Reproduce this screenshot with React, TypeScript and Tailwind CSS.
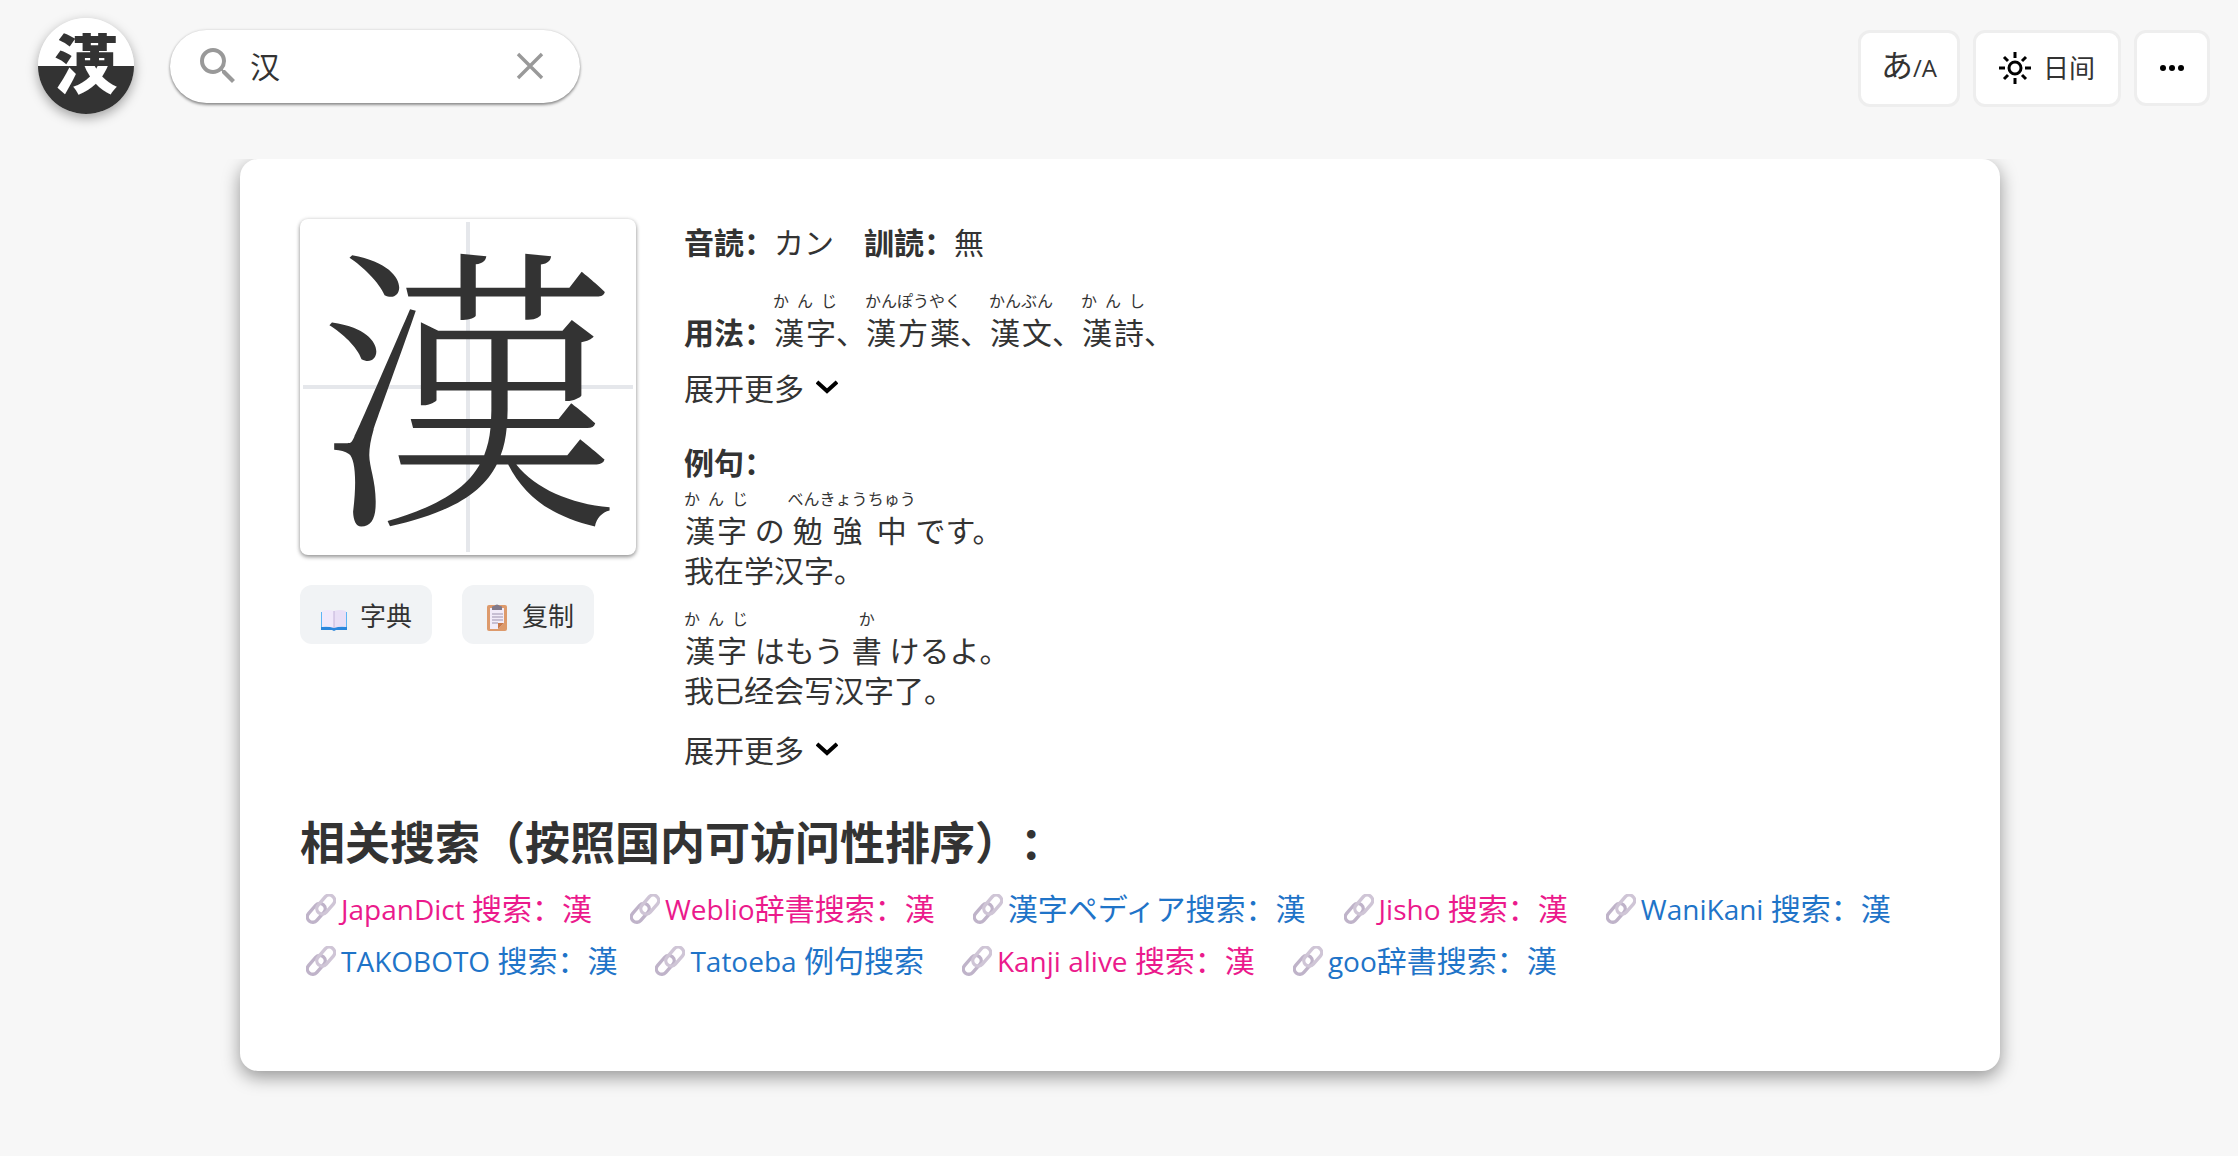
import type { ReactNode } from 'react';

type Annotated = { base: string; ruby: string };
type Part = string | Annotated;

const usages: Annotated[] = [
  { base: '漢字', ruby: 'か\u2002ん\u2002じ' },
  { base: '漢方薬', ruby: 'かんぽうやく' },
  { base: '漢文', ruby: 'かんぶん' },
  { base: '漢詩', ruby: 'か\u2002ん\u2002し' },
];

const examples: { parts: Part[]; translation: string }[] = [
  {
    parts: [
      { base: '漢字', ruby: 'か\u2002ん\u2002じ' },
      ' の ',
      { base: '勉強', ruby: 'べんきょう' },
      { base: '中', ruby: 'ちゅう' },
      ' です。',
    ],
    translation: '我在学汉字。',
  },
  {
    parts: [{ base: '漢字', ruby: 'か\u2002ん\u2002じ' }, ' はもう ', { base: '書', ruby: 'か' }, ' けるよ。'],
    translation: '我已经会写汉字了。',
  },
];

const links = [
  { latin: 'JapanDict ', text: '搜索：漢', visited: true },
  { latin: 'Weblio', text: '辞書搜索：漢', visited: true },
  { latin: '', text: '漢字ペディア搜索：漢', visited: false },
  { latin: 'Jisho ', text: '搜索：漢', visited: true },
  { latin: 'WaniKani ', text: '搜索：漢', visited: false },
  { latin: 'TAKOBOTO ', text: '搜索：漢', visited: false },
  { latin: 'Tatoeba ', text: '例句搜索', visited: false },
  { latin: 'Kanji alive ', text: '搜索：漢', visited: true },
  { latin: 'goo', text: '辞書搜索：漢', visited: false },
];

function Furigana({ base, ruby }: Annotated) {
  return (
    <ruby>
      {base}
      <rt className="text-[16px]">
        <span className="inline-block pb-1 leading-6">{ruby}</span>
      </rt>
    </ruby>
  );
}

function Logo() {
  return (
    <a href="#" aria-label="首页" className="size-24 shrink-0 rounded-full shadow-[0_4px_12px_rgba(0,0,0,0.35)]">
      <svg viewBox="0 0 96 96" className="size-24">
        <defs>
          <clipPath id="disc"><circle cx="48" cy="48" r="48" /></clipPath>
          <clipPath id="top"><rect width="96" height="48" /></clipPath>
          <clipPath id="bottom"><rect y="48" width="96" height="48" /></clipPath>
        </defs>
        <g clipPath="url(#disc)" className="text-[64px] font-black" textAnchor="middle">
          <rect width="96" height="48" fill="#fff" />
          <rect y="48" width="96" height="48" fill="#333" />
          <text x="48" y="70" fill="#333" clipPath="url(#top)">漢</text>
          <text x="48" y="70" fill="#fff" clipPath="url(#bottom)" aria-hidden="true">汉</text>
        </g>
      </svg>
    </a>
  );
}

function SearchBar() {
  return (
    <form className="flex h-[73px] w-[410px] items-center rounded-full bg-white pr-9 pl-6 shadow-[0_2px_3px_rgba(0,0,0,0.4),0_0_3px_rgba(0,0,0,0.15)]">
      <svg viewBox="0 0 24 24" className="size-12 shrink-0" fill="#999">
        <path d="M15.5 14h-.79l-.28-.27A6.471 6.471 0 0 0 16 9.5 6.5 6.5 0 1 0 9.5 16c1.61 0 3.09-.59 4.23-1.57l.27.28v.79l5 4.99L20.49 19l-4.99-5zm-6 0C7.01 14 5 11.99 5 9.5S7.01 5 9.5 5 14 7.01 14 9.5 11.99 14 9.5 14z" />
      </svg>
      <input
        type="text"
        aria-label="搜索"
        defaultValue="汉"
        className="ml-2 min-w-0 flex-1 bg-transparent text-[30px] outline-none"
      />
      <button type="button" aria-label="清除">
        <svg viewBox="0 0 28 28" className="size-7" fill="none" stroke="#999" strokeWidth="3.4">
          <path d="M2 2l24 24M26 2L2 26" />
        </svg>
      </button>
    </form>
  );
}

function ToolButton({ label, className, children }: { label: string; className: string; children: ReactNode }) {
  return (
    <button
      type="button"
      aria-label={label}
      className={`flex items-center justify-center rounded-[12px] border-[3px] border-[#eee] bg-white ${className}`}
    >
      {children}
    </button>
  );
}

function SunIcon() {
  return (
    <svg viewBox="0 0 32 32" className="size-8" fill="none" stroke="#000" strokeWidth="3">
      <circle cx="16" cy="16" r="6" />
      <path d="M16 0v6M16 26v6M0 16h6M26 16h6M5 5l4 4M23 23l4 4M27 5l-4 4M9 23l-4 4" />
    </svg>
  );
}

function BookIcon() {
  return (
    <svg viewBox="0 0 28 28" className="size-7">
      <path d="M1 9h26v18H1z" fill="#5db4f5" />
      <path d="M1 24h26v3H16l-2 1-2-1H1z" fill="#2b86dc" />
      <path d="M2 8q6-2 12 0v17q-6-2-12-1z" fill="#f1e9fb" />
      <path d="M26 8q-6-2-12 0v17q6-2 12-1z" fill="#e9dff6" />
      <path d="M14 8v17" stroke="#c3b3d8" />
    </svg>
  );
}

function ClipboardIcon() {
  return (
    <svg viewBox="0 0 28 28" className="size-7">
      <rect x="5" y="2" width="20" height="26" rx="2" fill="#dd9a6c" />
      <path d="M8 5h14v15l-6 6H8z" fill="#f2ecf9" />
      <path d="M22 20l-6 6v-6z" fill="#c8794a" />
      <path d="M10 7V4q0-1 2-1 3-3 6 0 2 0 2 1v3z" fill="#80798a" />
      <path d="M10 11h11M10 14h11M10 17h11M10 20h6" stroke="#9d92ad" />
    </svg>
  );
}

function LinkIcon() {
  return (
    <svg viewBox="0 0 30 30" className="size-[30px] shrink-0" fill="none" strokeWidth="3.4">
      <rect x="-0.5" y="13.4" width="21.5" height="10.8" rx="5.4" transform="rotate(-49 10.3 18.8)" stroke="#bfb3c9" />
      <rect x="9" y="5.2" width="21.5" height="10.8" rx="5.4" transform="rotate(-49 19.7 10.6)" stroke="#cfc5d6" />
    </svg>
  );
}

function MoreButton() {
  return (
    <button type="button" className="flex items-center gap-3 text-[30px] leading-10">
      展开更多
      <svg viewBox="0 0 22 18" className="h-[18px] w-[22px]" fill="none" stroke="#000" strokeWidth="4">
        <path d="M1 2l10 9L21 2" />
      </svg>
    </button>
  );
}

function ActionButton({ icon, children }: { icon: ReactNode; children: ReactNode }) {
  return (
    <button
      type="button"
      className="flex h-[59px] w-[132px] items-center justify-center gap-3 rounded-[12px] bg-[#f1f3f5] pt-1 text-[26px]"
    >
      {icon}
      {children}
    </button>
  );
}

function KanjiCard() {
  return (
    <div className="w-[336px] shrink-0">
      <div className="relative flex size-[336px] items-center justify-center rounded-[8px] bg-white shadow-[0_2px_4px_rgba(0,0,0,0.4),0_0_4px_rgba(0,0,0,0.1)]">
        <div className="absolute inset-x-[3px] top-[166px] h-1 bg-[#e5e7eb]" />
        <div className="absolute inset-y-[3px] left-[166px] w-1 bg-[#e5e7eb]" />
        <span className="relative pb-6 font-['Noto_Serif_CJK_JP','Noto_Sans_CJK_JP',serif] text-[300px] leading-none font-light">漢</span>
      </div>
      <div className="mt-[30px] flex gap-[30px]">
        <ActionButton icon={<BookIcon />}>字典</ActionButton>
        <ActionButton icon={<ClipboardIcon />}>复制</ActionButton>
      </div>
    </div>
  );
}

export default function App() {
  return (
    <div className="min-h-screen bg-[#f7f7f7] font-['Open_Sans','Noto_Sans_CJK_SC',sans-serif] text-[#333]">
      <header className="flex items-center justify-between pt-[18px] pr-7 pl-[38px]">
        <div className="flex items-center gap-9">
          <Logo />
          <SearchBar />
        </div>
        <nav className="flex items-center gap-[13px] pt-1">
          <ToolButton label="语言" className="h-[77px] w-[102px]">
            <span className="flex items-baseline pb-1 leading-10">
              <span className="text-[32px]">あ</span>
              <span className="text-[24px]">/A</span>
            </span>
          </ToolButton>
          <ToolButton label="日间" className="h-[77px] w-[148px] gap-3 text-[26px]">
            <SunIcon />
            日间
          </ToolButton>
          <ToolButton label="更多" className="size-[76px]">
            <svg viewBox="0 0 24 6" className="h-[6px] w-6">
              <circle cx="3" cy="3" r="3" />
              <circle cx="12" cy="3" r="3" />
              <circle cx="21" cy="3" r="3" />
            </svg>
          </ToolButton>
        </nav>
      </header>

      {/* clips the card shadow along its top edge */}
      <main className="mt-[45px] overflow-hidden pr-[238px] pb-16 pl-60">
        <article className="rounded-[18px] bg-white px-[60px] pt-[60px] pb-[84px] shadow-[0_6px_18px_rgba(0,0,0,0.4)]">
          <div className="flex gap-12">
            <KanjiCard />
            <div className="min-w-0 flex-1 pt-1 text-[30px] leading-10">
              <p className="flex gap-[30px]">
                <span><b>音読：</b>カン</span>
                <span><b>訓読：</b>無</span>
              </p>
              <p className="mt-[26px]">
                <b>用法：</b>
                {usages.map((u) => (
                  <span key={u.base}><Furigana {...u} />、</span>
                ))}
              </p>
              <div className="mt-4">
                <MoreButton />
              </div>
              <p className="mt-[34px] mb-1"><b>例句：</b></p>
              {examples.map((ex) => (
                <div key={ex.translation} className="mb-4">
                  <p>
                    {ex.parts.map((part, i) =>
                      typeof part === 'string' ? part : <Furigana key={i} {...part} />,
                    )}
                  </p>
                  <p>{ex.translation}</p>
                </div>
              ))}
              <div className="mt-5">
                <MoreButton />
              </div>
            </div>
          </div>
          <h2 className="mt-10 mb-2 text-[45px] leading-[64px] font-bold [text-spacing-trim:space-all]">
            相关搜索（按照国内可访问性排序）：
          </h2>
          <ul className="flex flex-wrap gap-x-[38px] pl-[6px] text-[30px] leading-[52px]">
            {links.map((link) => (
              <li key={link.latin + link.text}>
                <a
                  href="#"
                  className={`flex items-center gap-[5px] ${link.visited ? 'text-[#eb1a8c]' : 'text-[#1f74c8]'}`}
                >
                  <LinkIcon />
                  <span>
                    {link.latin && <span className="text-[28px]">{link.latin}</span>}
                    {link.text}
                  </span>
                </a>
              </li>
            ))}
          </ul>
        </article>
      </main>
    </div>
  );
}
